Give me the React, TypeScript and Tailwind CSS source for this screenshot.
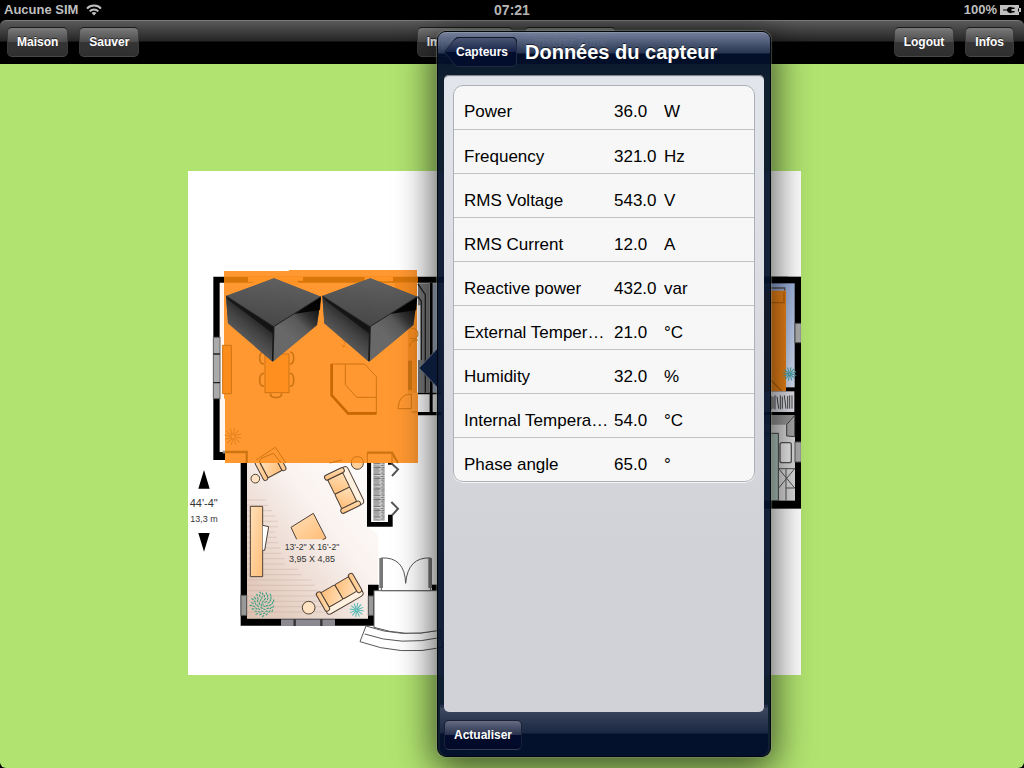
import React from "react";

type Reading = { name: string; value: string; unit: string };

const readings: Reading[] = [
  { name: "Power", value: "36.0", unit: "W" },
  { name: "Frequency", value: "321.0", unit: "Hz" },
  { name: "RMS Voltage", value: "543.0", unit: "V" },
  { name: "RMS Current", value: "12.0", unit: "A" },
  { name: "Reactive power", value: "432.0", unit: "var" },
  { name: "External Temperature", value: "21.0", unit: "°C" },
  { name: "Humidity", value: "32.0", unit: "%" },
  { name: "Internal Temperature", value: "54.0", unit: "°C" },
  { name: "Phase angle", value: "65.0", unit: "°" },
];

function WifiIcon() {
  return (
    <svg viewBox="0 0 16 12" className="h-3 w-4" aria-hidden="true">
      <g fill="none" stroke="#c0c0c0" strokeWidth="2">
        <path d="M1 4.6C4.6 0.6 11.4 0.6 15 4.6" />
        <path d="M3.7 7.4C6 4.8 10 4.8 12.3 7.4" />
      </g>
      <path d="M5.6 9.1C7 7.7 9 7.7 10.4 9.1L8 11.6Z" fill="#c0c0c0" />
    </svg>
  );
}

function BatteryIcon() {
  return (
    <svg viewBox="0 0 21 10" className="h-[10px] w-[21px]" aria-hidden="true">
      <rect x="0" y="0" width="19" height="10" fill="#c0c0c0" />
      <path d="M19 3h2v4h-2z" fill="#c0c0c0" />
      <path d="M3 4.400H7C7.500 2.500 9 1.800 11.500 1.800V2.600H14.500V4H11.500V6H14.500V7.400H11.500V8.200C9 8.200 7.500 7.500 7 5.600H3Z" fill="#000" />
      <path d="M18 3.500h1v3h-1z" fill="#000" />
    </svg>
  );
}

function StatusBar() {
  return (
    <div className="grid h-5 grid-cols-3 items-center bg-black text-[13px] leading-5 font-bold text-[#bfbfbf]">
      <div className="flex items-center gap-2 pl-1">
        <span>Aucune SIM</span>
        <WifiIcon />
      </div>
      <span className="text-center text-sm leading-5">07:21</span>
      <div className="flex items-center justify-end gap-[3px] pr-[3px]">
        <span>100%</span>
        <BatteryIcon />
      </div>
    </div>
  );
}

function BarButton({ children }: { children: React.ReactNode }) {
  return (
    <button
      type="button"
      className="h-[30px] rounded-[5px] border border-x-[#3a3a3a] border-t-[#1c1c1c] border-b-[#484848] bg-[linear-gradient(#7a7a7a_0%,#4c4c4c_49%,#353535_50%,#2f2f2f_100%)] px-[9px] text-xs font-bold whitespace-nowrap text-white [text-shadow:0_-1px_0_rgba(0,0,0,0.6)]"
    >
      {children}
    </button>
  );
}

function Toolbar() {
  return (
    <div className="bg-black">
      <nav className="flex h-11 items-center justify-between rounded-t-md border-t border-[#7b7b7b] bg-[linear-gradient(#5a5a5a_0,#252525_20px,#000_21px,#000_100%)] pr-[10px] pb-[2px] pl-[7px]">
        <div className="flex gap-[11px]">
          <BarButton>Maison</BarButton>
          <BarButton>Sauver</BarButton>
        </div>
        <div className="flex gap-[11px]">
          <BarButton>Importer plan</BarButton>
          <BarButton>Insérer Zone</BarButton>
        </div>
        <div className="flex gap-[11px]">
          <BarButton>Logout</BarButton>
          <BarButton>Infos</BarButton>
        </div>
      </nav>
    </div>
  );
}

function SensorCube({ x }: { x: number }) {
  return (
    <g transform={`translate(${x} 0)`}>
      <path d="M258 55 399 110 387 195 254 305 120 190 114 108Z" fill="#555" />
      <path d="M114 108 257 200 254 305 120 190Z" fill="url(#cubeLeft)" />
      <path d="M114 108 257 200 256 222 124 122Z" fill="#080808" opacity="0.600" />
      <path d="M399 110 257 200 254 305 387 195Z" fill="url(#cubeRight)" />
      <path d="M399 110 318 162 396 150Z" fill="#000" opacity="0.850" />
      <path d="M258 55 399 110 257 200 114 108Z" fill="url(#cubeTop)" />
      <path d="M114 108 257 200 399 110" fill="none" stroke="#222" strokeWidth="3" />
      <path d="M257 200 254 303" stroke="#181818" strokeWidth="5" />
    </g>
  );
}

function Sofa({ transform }: { transform: string }) {
  return (
    <g transform={transform} fill="url(#wood)" stroke="#4e4036" strokeWidth="3">
      <path d="M-62 -30Q-62 -38 -50 -38H50Q62 -38 62 -30V34H48V-16H-48V34H-62Z" fill="#fff1df" />
      <rect x="-48" y="-18" width="48" height="50" rx="4" />
      <rect x="0" y="-18" width="48" height="50" rx="4" />
      <rect x="-63" y="-26" width="15" height="64" rx="7" />
      <rect x="48" y="-26" width="15" height="64" rx="7" />
    </g>
  );
}

function FloorPlan() {
  const spokes = Array.from({ length: 12 }, (_, i) => i * 30);
  const leaves = Array.from({ length: 54 }, (_, i) => {
    const angle = i * 2.4;
    const radius = 5 * Math.sqrt(i);
    return { x: 224 + radius * Math.cos(angle), y: 492 + radius * Math.sin(angle), turn: (i * 67) % 180 };
  });
  return (
    <svg
      viewBox="188 171 613 504"
      className="block h-auto w-[613px] max-w-full bg-white"
      role="img"
      aria-label="Plan"
    >
      <defs>
        <linearGradient id="wood" x1="0" y1="0" x2="1" y2="1">
          <stop offset="0" stopColor="#ffe0b8" />
          <stop offset="1" stopColor="#ffbd78" />
        </linearGradient>
        <linearGradient id="floor" x1="1" y1="0" x2="0" y2="1">
          <stop offset="0" stopColor="#fff" />
          <stop offset="0.400" stopColor="#faf3f0" />
          <stop offset="1" stopColor="#dcc0b0" />
        </linearGradient>
        <linearGradient id="cubeTop" x1="0.600" y1="0" x2="0.400" y2="1">
          <stop offset="0" stopColor="#606060" />
          <stop offset="1" stopColor="#464646" />
        </linearGradient>
        <linearGradient id="cubeLeft" x1="0.650" y1="0.250" x2="0.350" y2="0.750">
          <stop offset="0" stopColor="#1c1c1c" />
          <stop offset="0.450" stopColor="#424242" />
          <stop offset="1" stopColor="#626262" />
        </linearGradient>
        <linearGradient id="cubeRight" x1="0.900" y1="0.150" x2="0.500" y2="0.700">
          <stop offset="0" stopColor="#101010" />
          <stop offset="0.350" stopColor="#333" />
          <stop offset="0.600" stopColor="#595959" />
          <stop offset="1" stopColor="#686868" />
        </linearGradient>
        <linearGradient id="blueRoom" x1="0" y1="0" x2="1" y2="1">
          <stop offset="0" stopColor="#6f8fce" />
          <stop offset="1" stopColor="#dbe4f6" />
        </linearGradient>
        <pattern id="books" width="34" height="32" patternUnits="userSpaceOnUse">
          <rect width="34" height="32" fill="#dcdcdc" />
          <path d="M0 3H30M4 8 34 7M0 13 32 15M2 19H34M0 24 30 23M3 29H33" stroke="#5c5c5c" strokeWidth="2.500" />
        </pattern>
      </defs>

      {/* Living room and entrance */}
      <g transform="translate(188 440) scale(0.33333)">
        <path d="M176 36H540V260L570 280V440H540V536H176Z" fill="url(#floor)" />
        <g stroke="#c39f8e" strokeWidth="2" opacity="0.500">
          <path d="M176 180H235M176 196H240M176 212H252M176 228H262M176 244H270M176 260H270M176 276H262M176 292H266M176 308H270M176 324H276M176 340H280M176 356H290M176 372H290M176 388H330M176 404H340M176 420H370M176 436H380M176 452H390M176 468H390M176 484H400M176 500H400M176 516H410" />
        </g>
        <path d="M158 36H177V536H540V434H572V452H558V557H158Z" fill="#000" />
        <path d="M732 434H748V452H732Z" fill="#000" />
        <rect x="159" y="466" width="17" height="60" fill="#999" stroke="#555" strokeWidth="3" />
        <rect x="541" y="468" width="16" height="58" fill="#999" stroke="#555" strokeWidth="3" />
        <rect x="279" y="538" width="162" height="20" fill="#8b8890" />
        <path d="M320 538V558M400 538V558" stroke="#333" strokeWidth="7" />
        <path d="M537 36H614V74H600V50H550V246H600V224H614V260H537Z" fill="#000" />
        <rect x="550" y="50" width="50" height="196" fill="#fff" />
        <rect x="556" y="50" width="34" height="192" fill="url(#books)" />
        <path d="M610 70 630 88 612 108M610 186 630 206 612 226" fill="none" stroke="#555" strokeWidth="6" />
        <path d="M187 199H224V410H187Z" fill="url(#wood)" stroke="#4e4036" strokeWidth="3" />
        <path d="M224 256 242 260 230 331H224" fill="#fff" stroke="#4e4036" strokeWidth="3" />
        <path d="M309 262 376 220 414 298H326Z" fill="url(#wood)" />
        <path d="M326 298 309 262 376 220 414 294 404 299" fill="none" stroke="#4e4036" strokeWidth="3" />
        <g transform="translate(246 74) rotate(-28)" fill="url(#wood)" stroke="#4e4036" strokeWidth="3">
          <rect x="-36" y="-38" width="72" height="24" rx="7" />
          <rect x="-24" y="-18" width="48" height="50" rx="4" />
          <rect x="-38" y="-28" width="14" height="64" rx="7" />
          <rect x="24" y="-28" width="14" height="64" rx="7" />
        </g>
        <circle cx="202" cy="116" r="13" fill="#ffe3c2" stroke="#4e4036" strokeWidth="3" />
        <circle cx="508" cy="70" r="18" fill="#ffcd96" stroke="#4e4036" strokeWidth="3" />
        <circle cx="362" cy="503" r="19" fill="#ffe3c2" stroke="#4e4036" strokeWidth="3" />
        <Sofa transform="translate(469 149) rotate(64)" />
        <Sofa transform="translate(456 462) rotate(150)" />
        {leaves.map((leaf, i) => (
          <ellipse
            key={i}
            cx={leaf.x}
            cy={leaf.y}
            rx="4.500"
            ry="1.800"
            transform={`rotate(${leaf.turn} ${leaf.x} ${leaf.y})`}
            fill="#3a9f84"
          />
        ))}
        {spokes.map((a) => (
          <path key={a} transform={`rotate(${a} 506 510)`} d="M506 508 509 489" stroke="#51b7b3" strokeWidth="3" />
        ))}
        <g fill="#fff" stroke="#555" strokeWidth="3">
          <path d="M534 558Q640 596 758 570L764 622Q640 650 516 605Z" />
          <path d="M530 582Q640 620 760 592" fill="none" />
          <path d="M558 452H748V572Q650 592 558 562Z" />
          <path d="M580 452V354Q650 350 653 430Q660 350 728 354V452Z" />
        </g>
        <rect x="574" y="354" width="11" height="90" fill="#777" />
        <rect x="721" y="354" width="11" height="90" fill="#777" />
        <path d="M48 90 65 146H31ZM48 335 65 279H31Z" fill="#000" />
        <g fill="#333" fontFamily="Liberation Sans, sans-serif" textAnchor="middle">
          <text x="47" y="200" fontSize="33">44'-4"</text>
          <text x="48" y="245" fontSize="27">13,3 m</text>
          <text x="372" y="329" fontSize="26">13'-2" X 16'-2"</text>
          <text x="372" y="366" fontSize="27">3,95 X 4,85</text>
        </g>
      </g>

      {/* Kitchen and dining area */}
      <g transform="translate(188 260) scale(0.33333)">
        <path d="M76 50H1800V68H95V576H176V600H76Z" fill="#000" />
        <rect x="96" y="70" width="80" height="506" fill="#fff6f0" />
        <rect x="76" y="232" width="20" height="184" fill="#aaa" stroke="#666" strokeWidth="3" />
        <path d="M76 282H96M76 368H96" stroke="#222" strokeWidth="4" />
        <path d="M104 576H158" stroke="#999" strokeWidth="8" />
        <path d="M690 70H724V398H690Z" fill="#777" />
        <path d="M690 72 712 104V398M690 110 700 124V300" fill="none" stroke="#222" strokeWidth="4" />
        <path d="M690 136H697V300H690Z" fill="#eee" />
        <path d="M734 70H760V398H734Z" fill="#a8b2cc" />
        <path d="M725 68H734V460H725ZM690 398H760V403H690ZM666 456H760V466H666Z" fill="#000" />
        <path d="M108 33H303V30H687V398H690V609H111V416H108Z" fill="#ff9831" />
        <path d="M108 50H690V68H108Z" fill="#d9760a" />
        <path d="M180 50H345V62H330V74H195V66H180ZM530 50H615V64H530Z" fill="#ff9426" />
        <path d="M620 68H687V398H660V190H620Z" fill="#f58b20" />
        <g fill="none" stroke="#ce7412" strokeWidth="3">
          <rect x="104" y="256" width="26" height="145" fill="#fb8d1c" />
          <rect x="231" y="282" width="72" height="116" fill="#ff8f1e" />
          <path d="M228 276Q215 276 215 294T228 312M228 340Q215 340 215 360T228 378M306 276Q317 276 317 294T306 312M306 340Q317 340 317 360T306 378M247 400Q247 413 264 413T281 400" strokeWidth="5" />
          <path d="M430 312H530L565 350V462H480L430 408Z" />
          <path d="M472 312V374L506 412H565" />
          <path d="M431 312V406L480 460H565" stroke="#c96800" strokeWidth="8" />
          <path d="M630 446Q632 402 670 402V446ZM670 456H690" />
          <path d="M666 204Q690 204 690 222T666 236M690 240Q666 240 666 260" />
          <path d="M666 302V390" strokeWidth="12" />
          {spokes.map((a) => (
            <path key={a} transform={`rotate(${a} 135 530)`} d="M135 525 140 505" opacity="0.600" />
          ))}
          <path d="M204 600 262 562 294 609M216 609Q210 600 222 594L256 580 280 609M490 609Q490 590 508 590T526 609M425 609 462 600M538 609V578H612V609" />
          <path d="M111 576H176V609M538 578H612L630 609" strokeWidth="7" />
          <path d="M462 240 482 250M460 255 476 262M474 238 465 265" opacity="0.500" />
        </g>
        <SensorCube x={0} />
        <SensorCube x={289} />
      </g>

      {/* East rooms */}
      <g transform="translate(740 260) scale(0.33333)">
        <rect x="0" y="50" width="184" height="696" fill="#000" />
        <rect x="0" y="70" width="164" height="312" fill="url(#blueRoom)" />
        <path d="M60 84H134V92" fill="none" stroke="#555" strokeWidth="4" />
        <rect x="0" y="92" width="138" height="302" fill="#ef8518" />
        <path d="M93 128H132V96M93 360 124 392" fill="none" stroke="#ba650b" strokeWidth="4" />
        {spokes.map((a) => (
          <path key={a} transform={`rotate(${a} 149 342)`} d="M149 340 153 322" stroke="#46a0a5" strokeWidth="3" />
        ))}
        <rect x="0" y="394" width="163" height="62" fill="#e4e5ee" />
        <path d="M94 408V450M99 410V446M105 406V448M111 410 116 446M121 406V448M127 410V446M133 406 138 446M143 408V446M149 406V446M156 406V446" stroke="#444" strokeWidth="3" />
        <rect x="0" y="466" width="165" height="256" fill="#ddd" />
        <path d="M0 466H164L140 494H0Z" fill="#999" />
        <path d="M164 466V530L140 528V494Z" fill="#aaa" stroke="#444" strokeWidth="3" />
        <rect x="0" y="520" width="115" height="202" fill="#b8d1c8" stroke="#444" strokeWidth="3" />
        <rect x="120" y="548" width="34" height="60" rx="6" fill="#eee" stroke="#555" strokeWidth="4" />
        <path d="M116 626H165M138 626V722M116 626 164 684M164 626 116 684M138 684H165" fill="none" stroke="#555" strokeWidth="3" />
        <rect x="165" y="190" width="19" height="58" fill="#aaa" stroke="#555" strokeWidth="3" />
        <rect x="165" y="546" width="19" height="60" fill="#aaa" stroke="#555" strokeWidth="3" />
      </g>
    </svg>
  );
}

function ReadingsTable() {
  return (
    <table className="w-full table-fixed border-separate border-spacing-0 rounded-[10px] border border-[#adb0b6] bg-[#f7f7f7] text-[17px] leading-5 text-black shadow-[0_1px_0_#f4f5f7]">
      <colgroup>
        <col className="w-[160px]" />
        <col className="w-[50px]" />
        <col />
      </colgroup>
      <tbody className="[&>tr:first-child>*]:pt-2 [&>tr:last-child]:h-[43px] [&>tr:last-child>*]:border-b-0">
        {readings.map((r) => (
          <tr key={r.name} className="h-11 [&>*]:border-b [&>*]:border-[#c1c2c5] [&>*]:pt-[10px] [&>*]:pb-0">
            <th scope="row" className="truncate pr-1 pl-[10px] text-left font-normal">
              {r.name}
            </th>
            <td className="px-0">{r.value}</td>
            <td className="px-0">{r.unit}</td>
          </tr>
        ))}
      </tbody>
    </table>
  );
}

function SensorPopover() {
  return (
    <section
      aria-labelledby="popover-title"
      className="absolute top-[31px] bottom-[11px] left-[437px] flex w-[334px] flex-col rounded-[9px] border border-[#02060f] bg-[#04122c]/94 px-[2px] shadow-[0_0_1px_1px_rgba(150,160,140,0.4),0_8px_36px_4px_rgba(0,0,0,0.65)]"
    >
      <svg viewBox="0 0 19 38" className="absolute top-[317px] -left-[20px] h-[38px] w-[19px]" aria-hidden="true">
        <path d="M19 0 1 19 19 38Z" fill="#0b1a37" />
        <path d="M19 0 1 19 19 38" fill="none" stroke="#5b6476" strokeWidth="1" />
      </svg>
      <header className="-mx-[2px] flex h-[43px] shrink-0 items-center gap-2 rounded-t-lg border-t border-[#8991a4] bg-[linear-gradient(rgba(190,200,230,0.58)_0,rgba(150,165,205,0.24)_20px,rgba(0,10,40,0.3)_21px,rgba(0,10,40,0.1)_100%)] pb-1 pl-[6px]">
        <button type="button" className="relative h-[30px] w-[73px] pl-[3px] text-xs font-bold text-white">
          <svg viewBox="0 0 73 30" className="absolute inset-0 h-full w-full" aria-hidden="true">
            <defs>
              <linearGradient id="backFill" x1="0" y1="0" x2="0" y2="1">
                <stop offset="0" stopColor="#4e5875" />
                <stop offset="0.490" stopColor="#172448" />
                <stop offset="0.500" stopColor="#020c2e" />
                <stop offset="1" stopColor="#030e2b" />
              </linearGradient>
            </defs>
            <path
              d="M.5 15 10 3Q12 .5 15 .5H68Q72.500 .5 72.500 5V25Q72.500 29.500 68 29.500H15Q12 29.500 10 27Z"
              fill="url(#backFill)"
              stroke="#20293f"
            />
            <path d="M10 3Q12 .5 15 .5H68Q72.500 .5 72.500 5" fill="none" stroke="#10172b" />
          </svg>
          <span className="relative">Capteurs</span>
        </button>
        <h1
          id="popover-title"
          className="text-xl leading-6 font-bold whitespace-nowrap text-white [text-shadow:0_-1px_0_rgba(0,0,0,0.6)]"
        >
          Données du capteur
        </h1>
      </header>
      <div className="relative z-10 mx-1 min-h-0 flex-1 overflow-auto rounded-[5px] bg-[linear-gradient(#e2e5eb_0%,#d1d2d7_75%,#d1d2d7_100%)] px-[9px] pt-[10px] shadow-[inset_0_2px_1px_-1px_#777b85]">
        <ReadingsTable />
      </div>
      <footer className="-mt-2 h-[52px] shrink-0 rounded-b-lg bg-[linear-gradient(#142039_0,#3c475e_5px,#1b2742_29px,#04112c_30px,#04112c_100%)] px-1 pt-4">
        <button
          type="button"
          className="h-[30px] rounded-[5px] border border-x-[#1a2237] border-t-[#1c2233] border-b-[#333c50] bg-[linear-gradient(#656c83_0%,#28314d_49%,#030c2e_50%,#020a27_100%)] px-[9px] text-xs font-bold text-white"
        >
          Actualiser
        </button>
      </footer>
    </section>
  );
}

export default function App() {
  return (
    <div className="relative flex min-h-screen flex-col overflow-hidden bg-black font-['Liberation_Sans',Arial,sans-serif]">
      <StatusBar />
      <Toolbar />
      <main className="flex flex-1 items-start justify-center rounded-b-md bg-[#b1e370] pt-[107px] pr-[35px] pb-[93px]">
        <FloorPlan />
      </main>
      <SensorPopover />
    </div>
  );
}
